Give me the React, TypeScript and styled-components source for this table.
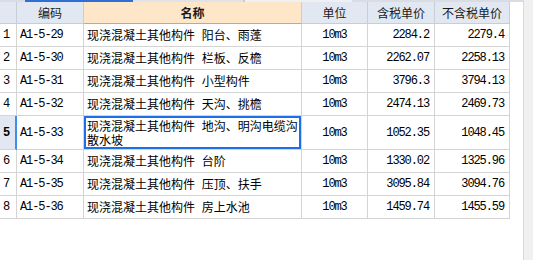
import React from "react";
import styled, { createGlobalStyle, css } from "styled-components";

const GlobalStyle = createGlobalStyle`
  html, body { margin: 0; padding: 0; background: #ffffff; }
  body { width: 533px; height: 260px; overflow: hidden; }
`;

const Page = styled.div`
  display: flex;
  width: 533px;
  height: 260px;
  background: #ffffff;
`;

const Main = styled.div`
  flex: 0 0 523px;
  display: flex;
  flex-direction: column;
`;

const TopStrip = styled.div`
  height: 2px;
  display: flex;
  background: #d9dde3;
`;

const StripSeg = styled.div<{ $w: number; $c: string }>`
  flex: 0 0 ${(p) => p.$w}px;
  background: ${(p) => p.$c};
`;

const Scrollbar = styled.div`
  flex: 1;
  background: #f0f0f0;
  border-left: 1px solid #dadada;
`;

const Grid = styled.div`
  display: grid;
  grid-template-columns: 17px 67px 218px 66px 67px 75px;
  grid-template-rows: 22px repeat(4, 23px) 34px repeat(3, 23px);
  width: 510px;
  font-family: "Noto Sans CJK SC", "Noto Sans", sans-serif;
  color: #000;
`;

const HeadCell = styled.div<{ $accent?: boolean }>`
  box-sizing: border-box;
  display: flex;
  align-items: center;
  justify-content: center;
  font-size: 12px;
  background: ${(p) => (p.$accent ? "#fee6c9" : "#e2e8f1")};
  border-right: 1px solid #c9ced6;
  border-bottom: 1px solid ${(p) => (p.$accent ? "#8fb1e3" : "#c9ced6")};
  font-weight: ${(p) => (p.$accent ? 700 : 400)};
  color: #1a1a1a;
`;

const cellBase = css`
  box-sizing: border-box;
  display: flex;
  align-items: center;
  border-right: 1px solid #d4d4d4;
  border-bottom: 1px solid #d4d4d4;
  background: #ffffff;
`;

const mono = css`
  font-family: "Liberation Mono", monospace;
  font-size: 12px;
  letter-spacing: -1.1px;
`;

const RowNum = styled.div<{ $sel?: boolean }>`
  ${cellBase};
  ${mono};
  padding-left: 3px;
  ${(p) =>
    p.$sel &&
    css`
      background: #e2e8f1;
      font-weight: 700;
      border-right: 2px solid #3f8ee8;
    `}
`;

const CodeCell = styled.div`
  ${cellBase};
  ${mono};
  padding-left: 3px;
`;

const NameCell = styled.div<{ $sel?: boolean }>`
  ${cellBase};
  padding-left: 3px;
  font-size: 12px;
  line-height: 14px;
  word-spacing: 4px;
  ${(p) =>
    p.$sel &&
    css`
      box-shadow: inset 0 0 0 2px #1c6fe6;
      padding-top: 1px;
    `}
`;

const UnitCell = styled.div`
  ${cellBase};
  ${mono};
  justify-content: center;
`;

const NumCell = styled.div`
  ${cellBase};
  ${mono};
  justify-content: flex-end;
  padding-right: 5px;
`;

type Row = {
  code: string;
  name: string;
  unit: string;
  tax: string;
  notax: string;
};

const rows: Row[] = [
  { code: "A1-5-29", name: "现浇混凝土其他构件 阳台、雨蓬", unit: "10m3", tax: "2284.2", notax: "2279.4" },
  { code: "A1-5-30", name: "现浇混凝土其他构件 栏板、反檐", unit: "10m3", tax: "2262.07", notax: "2258.13" },
  { code: "A1-5-31", name: "现浇混凝土其他构件 小型构件", unit: "10m3", tax: "3796.3", notax: "3794.13" },
  { code: "A1-5-32", name: "现浇混凝土其他构件 天沟、挑檐", unit: "10m3", tax: "2474.13", notax: "2469.73" },
  { code: "A1-5-33", name: "现浇混凝土其他构件 地沟、明沟电缆沟散水坡", unit: "10m3", tax: "1052.35", notax: "1048.45" },
  { code: "A1-5-34", name: "现浇混凝土其他构件 台阶", unit: "10m3", tax: "1330.02", notax: "1325.96" },
  { code: "A1-5-35", name: "现浇混凝土其他构件 压顶、扶手", unit: "10m3", tax: "3095.84", notax: "3094.76" },
  { code: "A1-5-36", name: "现浇混凝土其他构件 房上水池", unit: "10m3", tax: "1459.74", notax: "1455.59" },
];

const SEL = 4;

export default function App() {
  return (
    <>
      <GlobalStyle />
      <Page>
        <Main>
          <TopStrip>
            <StripSeg $w={25} $c="#d9dde3" />
            <StripSeg $w={108} $c="#2f6fd3" />
            <StripSeg $w={110} $c="#dfe2e7" />
            <StripSeg $w={2} $c="#c8ccd2" />
            <StripSeg $w={107} $c="#eef0f3" />
          </TopStrip>
          <Grid>
            <HeadCell />
            <HeadCell>编码</HeadCell>
            <HeadCell $accent>名称</HeadCell>
            <HeadCell>单位</HeadCell>
            <HeadCell>含税单价</HeadCell>
            <HeadCell>不含税单价</HeadCell>
            {rows.map((r, i) => (
              <React.Fragment key={r.code}>
                <RowNum $sel={i === SEL}>{i + 1}</RowNum>
                <CodeCell>{r.code}</CodeCell>
                <NameCell $sel={i === SEL}>{r.name}</NameCell>
                <UnitCell>{r.unit}</UnitCell>
                <NumCell>{r.tax}</NumCell>
                <NumCell>{r.notax}</NumCell>
              </React.Fragment>
            ))}
          </Grid>
        </Main>
        <Scrollbar />
      </Page>
    </>
  );
}
